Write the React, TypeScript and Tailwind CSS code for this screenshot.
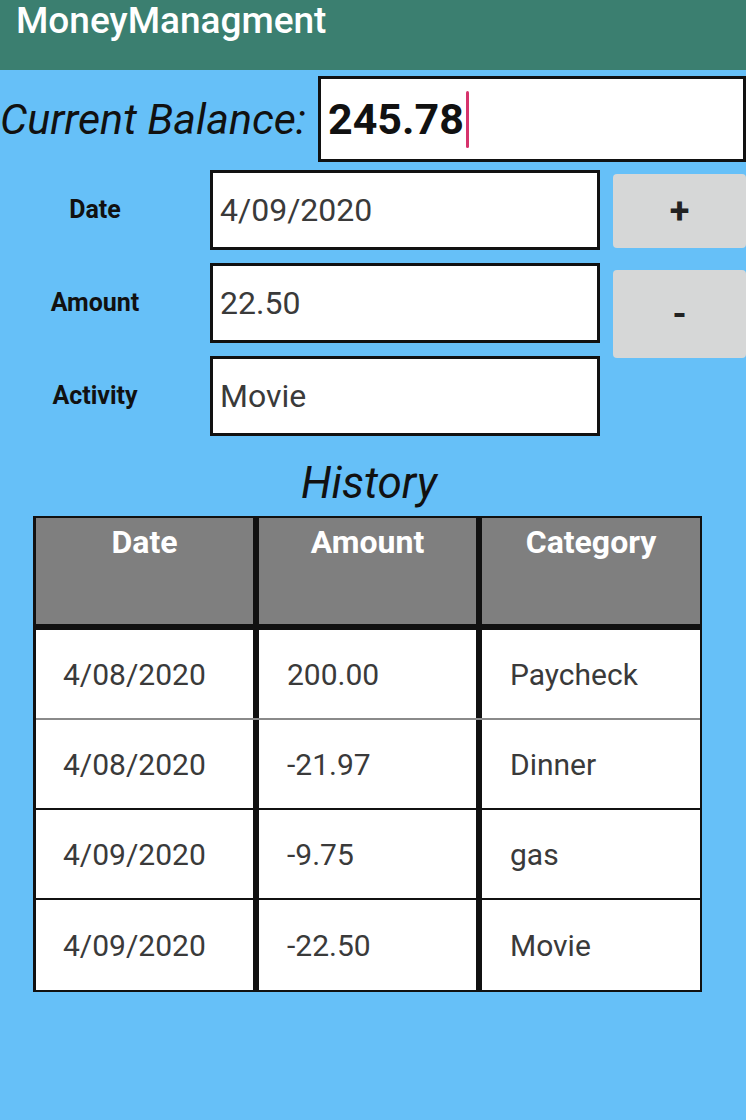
import React from "react";

const rows = [
  { date: "4/08/2020", amount: "200.00", category: "Paycheck" },
  { date: "4/08/2020", amount: "-21.97", category: "Dinner" },
  { date: "4/09/2020", amount: "-9.75", category: "gas" },
  { date: "4/09/2020", amount: "-22.50", category: "Movie" },
];

const fields = [
  { label: "Date", value: "4/09/2020" },
  { label: "Amount", value: "22.50" },
  { label: "Activity", value: "Movie" },
];

export default function App() {
  return (
    <div className="w-[746px] h-[1120px] bg-[#66c0f8] font-['Roboto',sans-serif] overflow-hidden">
      {/* app bar */}
      <div className="h-[70px] bg-[#3b7f70] px-4 pt-[1px]">
        <h1 className="text-[37px] leading-[40px] font-medium text-white">MoneyManagment</h1>
      </div>

      {/* balance */}
      <div className="flex items-center mt-[6px] h-[86px]">
        <span className="text-[43px] italic text-[#111] leading-none whitespace-nowrap">
          Current Balance:
        </span>
        <div className="ml-auto w-[428px] h-[86px] bg-white border-[3px] border-[#111] flex items-center pl-[7px]">
          <span className="text-[43px] font-bold text-[#111] leading-none">245.78</span>
          <span className="ml-[2px] w-[3px] h-[57px] bg-[#d6336c] rounded-sm" />
        </div>
      </div>

      {/* form */}
      <div className="flex mt-[8px]">
        <div className="flex flex-col gap-[13px]">
          {fields.map((f) => (
            <div key={f.label} className="flex items-center h-[80px]">
              <div className="w-[190px] text-center text-[25px] font-bold text-[#111]">{f.label}</div>
              <div className="ml-[20px] w-[390px] h-[80px] bg-white border-[3px] border-[#111] flex items-center pl-[7px]">
                <span className="text-[32px] text-[#3a3a3a]">{f.value}</span>
              </div>
            </div>
          ))}
        </div>
        <div className="ml-[13px] flex-1 flex flex-col pt-[4px]">
          <button className="h-[74px] rounded bg-[#d6d7d7] text-[#222] text-[36px] font-bold leading-none">+</button>
          <button className="mt-[22px] h-[88px] rounded bg-[#d6d7d7] text-[#222] text-[36px] font-bold leading-none">-</button>
        </div>
      </div>

      {/* history */}
      <h2 className="mt-[22px] text-center text-[44px] italic text-[#111] leading-[50px] pr-[8px]">History</h2>

      <div className="mt-[8px] ml-[33px] w-[669px] border-t-2 border-b-2 border-l-[3px] border-r-2 border-[#111] bg-white">
        <div className="grid grid-cols-[223px_223px_1fr] h-[112px] bg-[#7f7f7f] border-b-[6px] border-[#111]">
          {["Date", "Amount", "Category"].map((h, i) => (
            <div
              key={h}
              className={`text-center text-[32px] font-bold text-white ${i < 2 ? "border-r-[6px] border-[#111]" : ""}`}
            >
              {h}
            </div>
          ))}
        </div>
        {rows.map((r, idx) => (
          <div
            key={idx}
            className={`grid grid-cols-[223px_223px_1fr] h-[90px] ${
              idx === 0 ? "border-b-2 border-[#8a8a8a]" : idx < rows.length - 1 ? "border-b-2 border-[#111]" : ""
            }`}
          >
            <div className="flex items-center pl-[27px] text-[30px] text-[#3a3a3a] border-r-[6px] border-[#111]">{r.date}</div>
            <div className="flex items-center pl-[28px] text-[30px] text-[#3a3a3a] border-r-[6px] border-[#111]">{r.amount}</div>
            <div className="flex items-center pl-[28px] text-[30px] text-[#3a3a3a]">{r.category}</div>
          </div>
        ))}
      </div>
    </div>
  );
}
